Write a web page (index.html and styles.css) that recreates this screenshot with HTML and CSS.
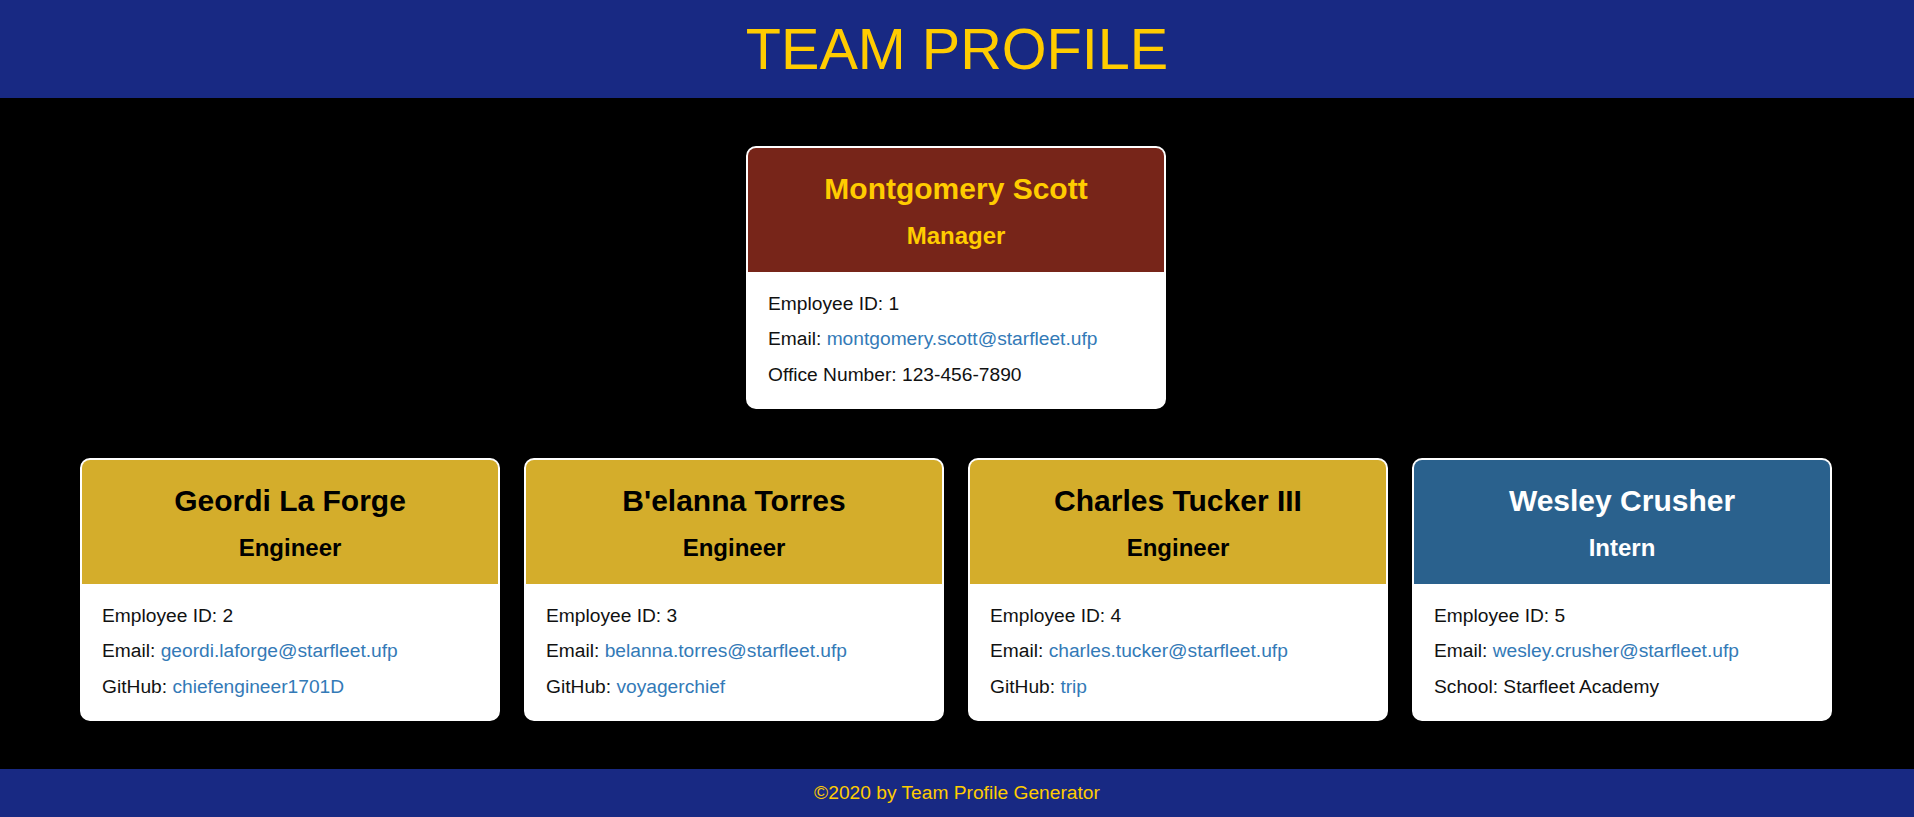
FILE: index.html
```html
<!DOCTYPE html>
<html lang="en">
<head>
<meta charset="UTF-8">
<title>Team Profile</title>
<link rel="stylesheet" href="styles.css">
</head>
<body>
<header class="top-bar">
  <h1 class="title">TEAM PROFILE</h1>
</header>
<main class="main">
  <div class="row">
    <div class="card">
      <div class="card-head manager">
        <h2 class="name">Montgomery Scott</h2>
        <h3 class="role">Manager</h3>
      </div>
      <div class="card-body">
        <p class="line">Employee ID: 1</p>
        <p class="line">Email: <a href="#">montgomery.scott@starfleet.ufp</a></p>
        <p class="line">Office Number: 123-456-7890</p>
      </div>
    </div>
  </div>
  <div class="row">
    <div class="card">
      <div class="card-head engineer">
        <h2 class="name">Geordi La Forge</h2>
        <h3 class="role">Engineer</h3>
      </div>
      <div class="card-body">
        <p class="line">Employee ID: 2</p>
        <p class="line">Email: <a href="#">geordi.laforge@starfleet.ufp</a></p>
        <p class="line">GitHub: <a href="#">chiefengineer1701D</a></p>
      </div>
    </div>
    <div class="card">
      <div class="card-head engineer">
        <h2 class="name">B'elanna Torres</h2>
        <h3 class="role">Engineer</h3>
      </div>
      <div class="card-body">
        <p class="line">Employee ID: 3</p>
        <p class="line">Email: <a href="#">belanna.torres@starfleet.ufp</a></p>
        <p class="line">GitHub: <a href="#">voyagerchief</a></p>
      </div>
    </div>
    <div class="card">
      <div class="card-head engineer">
        <h2 class="name">Charles Tucker III</h2>
        <h3 class="role">Engineer</h3>
      </div>
      <div class="card-body">
        <p class="line">Employee ID: 4</p>
        <p class="line">Email: <a href="#">charles.tucker@starfleet.ufp</a></p>
        <p class="line">GitHub: <a href="#">trip</a></p>
      </div>
    </div>
    <div class="card">
      <div class="card-head intern">
        <h2 class="name">Wesley Crusher</h2>
        <h3 class="role">Intern</h3>
      </div>
      <div class="card-body">
        <p class="line">Employee ID: 5</p>
        <p class="line">Email: <a href="#">wesley.crusher@starfleet.ufp</a></p>
        <p class="line">School: Starfleet Academy</p>
      </div>
    </div>
  </div>
</main>
<footer class="bottom-bar">©2020 by Team Profile Generator</footer>
</body>
</html>
```

FILE: styles.css
```css
* { box-sizing: border-box; }
html, body { margin: 0; padding: 0; }
body {
  background: #000;
  font-family: "Liberation Sans", Arial, sans-serif;
  color: #111;
  min-height: 817px;
  display: flex;
  flex-direction: column;
}
.top-bar {
  background: #182983;
  height: 98px;
  text-align: center;
}
.title {
  margin: 0;
  font-size: 57.6px;
  font-weight: 400;
  line-height: 98px;
  color: #ffcc00;
}
.main {
  flex: 1;
  display: flex;
  flex-direction: column;
  align-items: center;
  gap: 49px;
  padding: 48px 2px 48px 0;
}
.row {
  display: flex;
  justify-content: center;
  gap: 24px;
}
.card {
  width: 420px;
  height: 263px;
  border: 2px solid #fff;
  border-radius: 10px;
  background: #fff;
  overflow: hidden;
}
.card-head {
  height: 124px;
  padding: 23px 10px 0;
  text-align: center;
}
.manager { background: #772519; color: #ffcc00; }
.engineer { background: #d4ad2b; color: #000; }
.intern { background: #2a618d; color: #fff; }
.name {
  margin: 0 0 14px;
  font-size: 30px;
  line-height: 36px;
  font-weight: 700;
}
.role {
  margin: 0;
  font-size: 24px;
  line-height: 30px;
  font-weight: 700;
}
.card-body {
  padding: 14px 20px 0;
}
.line {
  margin: 0;
  font-size: 19.2px;
  line-height: 35.3px;
  color: #111;
}
.line a {
  color: #337ab7;
  text-decoration: none;
}
.bottom-bar {
  background: #182983;
  height: 48px;
  line-height: 48px;
  text-align: center;
  color: #ffcc00;
  font-size: 19.2px;
}
```
